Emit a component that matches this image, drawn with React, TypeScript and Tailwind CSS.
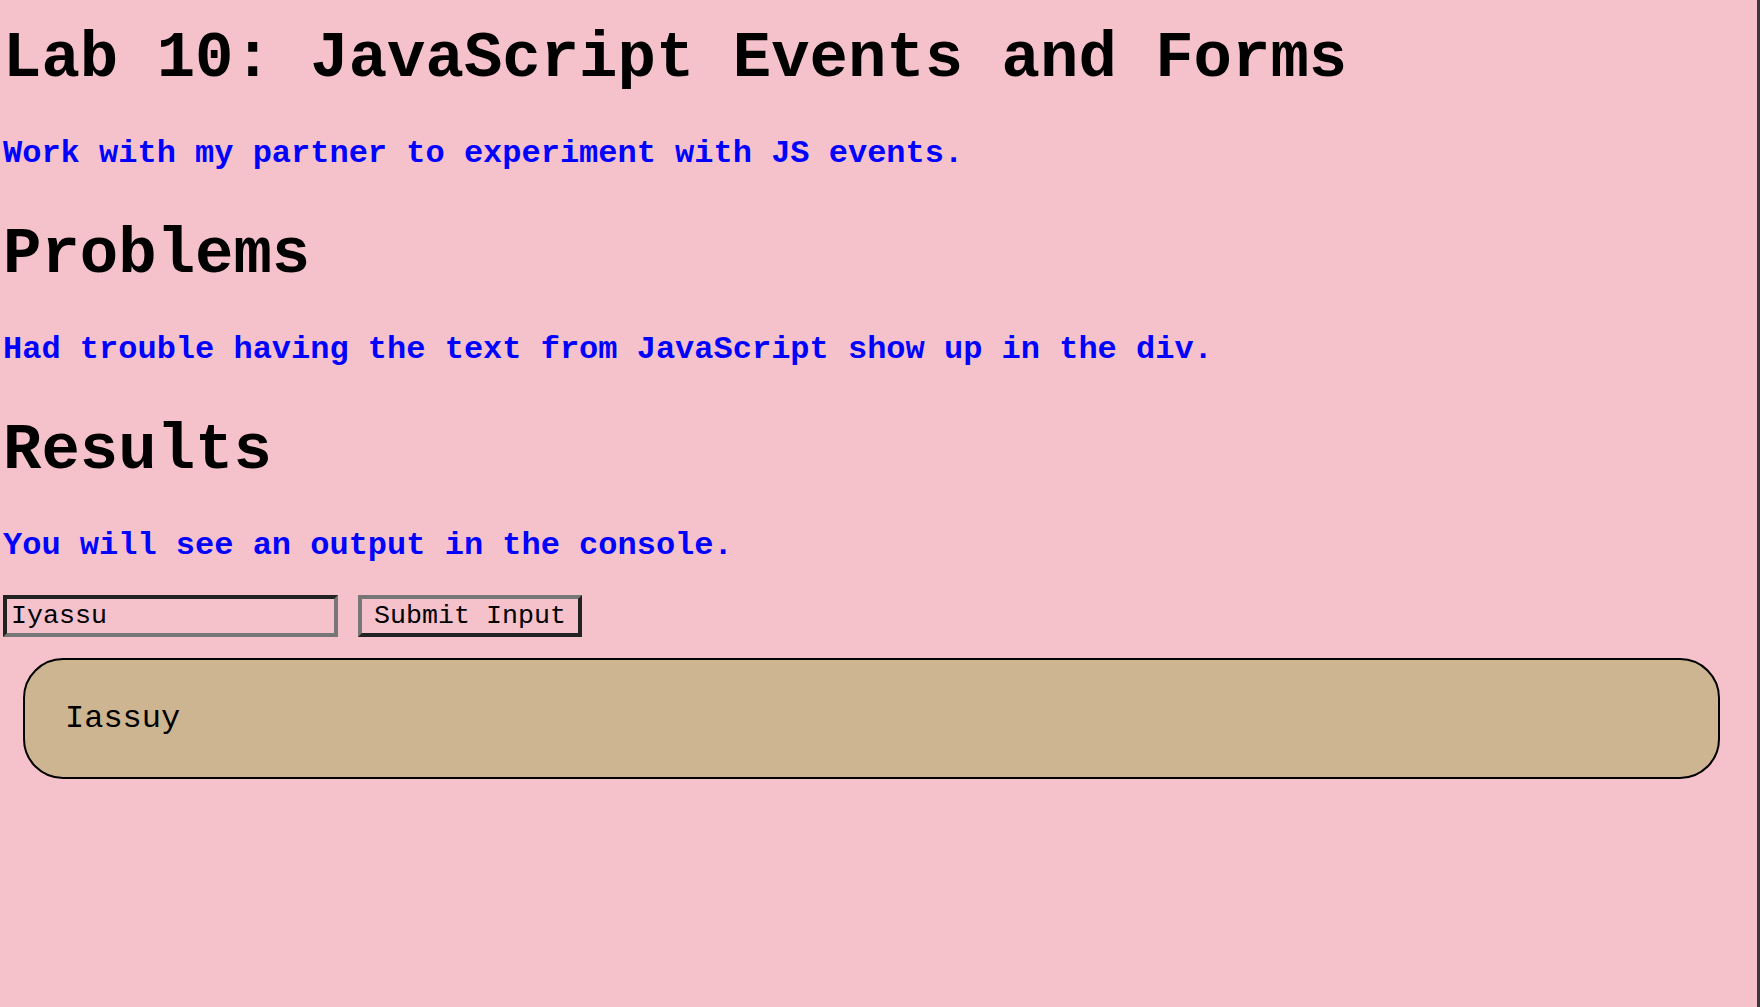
import React from 'react'

const App = () => {
  return (
    <div className="min-h-screen bg-[#f5c1cb] border-r-[3px] border-[#3a3a3e] pt-[27px] font-['Liberation_Mono','Courier_New',monospace] text-black">
      {/* Title */}
      <h1 className="pl-[3px] text-[64px] leading-[64px] font-bold">Lab 10: JavaScript Events and Forms</h1>
      <p className="mt-[47px] pl-[3px] text-[32px] leading-[32px] font-bold text-[#0000ff]">
        Work with my partner to experiment with JS events.
      </p>

      <h2 className="mt-[53px] pl-[3px] text-[64px] leading-[64px] font-bold">Problems</h2>
      <p className="mt-[47px] pl-[3px] text-[32px] leading-[32px] font-bold text-[#0000ff]">
        Had trouble having the text from JavaScript show up in the div.
      </p>

      <h2 className="mt-[53px] pl-[3px] text-[64px] leading-[64px] font-bold">Results</h2>
      <p className="mt-[47px] pl-[3px] text-[32px] leading-[32px] font-bold text-[#0000ff]">
        You will see an output in the console.
      </p>

      {/* Form */}
      <div className="mt-[33px] ml-[3px] flex gap-[20px]">
        <input
          type="text"
          defaultValue="Iyassu"
          className="w-[335px] h-[42px] bg-transparent px-[4px] py-[2px] text-[26.67px] leading-[30px] border-4 border-t-[#222] border-l-[#222] border-b-[#777] border-r-[#777] outline-none"
        />
        <button className="w-[224px] h-[42px] bg-transparent text-[26.67px] leading-[30px] border-4 border-t-[#777] border-l-[#777] border-b-[#222] border-r-[#222]">
          Submit Input
        </button>
      </div>

      {/* Output */}
      <div className="mt-[21px] ml-[23px] mr-[37px] border-2 border-black rounded-[40px] bg-[#cdb592] p-[40px] text-[32px] leading-[37px]">
        Iassuy
      </div>
    </div>
  )
}

export default App
